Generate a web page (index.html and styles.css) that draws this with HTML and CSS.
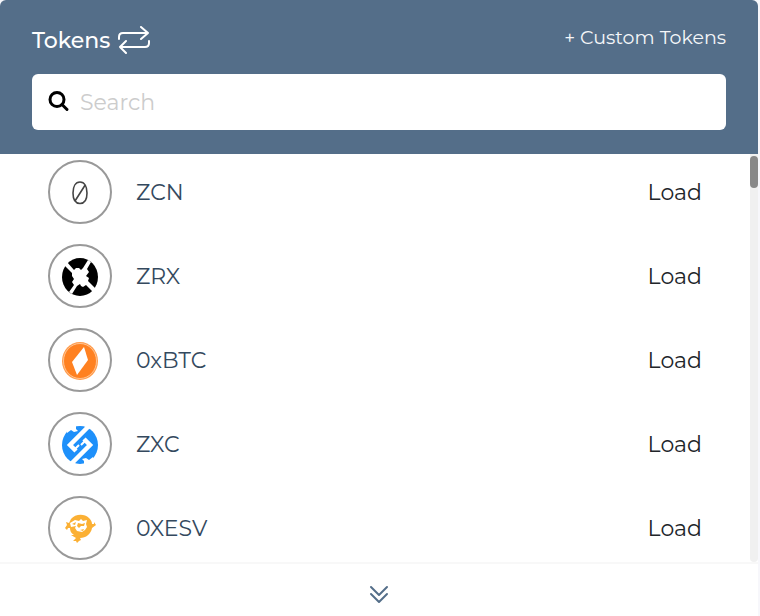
FILE: index.html
```
<!DOCTYPE html>
<html lang="en">
<head>
    <meta charset="UTF-8">
    <title>Tokens</title>
    <link rel="stylesheet" href="styles.css">
</head>
<body>
    <section class="tokens">
        <header class="tokens-header">
            <div class="title-row">
                <h1>Tokens</h1>
                <button class="refresh" type="button" aria-label="Refresh">
                    <svg width="32" height="28" viewBox="0 0 32 28">
                        <path d="M1 13V11Q1 7 5 7H30M23 1L30 7L23 13M31 15V17Q31 21 27 21H2M8 15L2 21L8 27"/>
                    </svg>
                </button>
                <a class="custom" href="#">+ Custom Tokens</a>
            </div>
            <label class="search">
                <svg width="22" height="22" viewBox="0 0 22 22">
                    <circle cx="9" cy="8.500" r="7"/>
                    <path d="M14 13.500L19 18.500"/>
                </svg>
                <input type="text" placeholder="Search" aria-label="Search">
            </label>
        </header>
        <div class="list-wrap">
            <ul class="list">
                <li>
                    <span class="icon">
                        <svg width="36" height="38" viewBox="0 0 36 38">
                            <path fill="none" stroke="#444" stroke-width="1.6" d="M18 8C22.5 8 25 12.500 25 19C25 25.500 22.500 29.500 18 29.500C13.500 29.500 11 25.500 11 19C11 12.500 13.500 8 18 8ZM13 27L23.500 10.500"/>
                        </svg>
                    </span>
                    <span class="name">ZCN</span>
                    <button class="load" type="button">Load</button>
                </li>
                <li>
                    <span class="icon">
                        <svg width="36" height="38" viewBox="0 0 36 38">
                            <ellipse cx="18" cy="19" rx="18" ry="19"/>
                            <path fill="#fff" d="M2 7L5 4L12 12L14 10L17 10L19 12L21 10L26 2L29 4L25 11L27 14L24 18L27 20L26 23L34 31L31 34L24 27L21 29L19 28L18 26L15 28L10 36L7 34L12 27L10 24L12 21L10 18L10 15Z"/>
                        </svg>
                    </span>
                    <span class="name">ZRX</span>
                    <button class="load" type="button">Load</button>
                </li>
                <li>
                    <span class="icon">
                        <svg width="36" height="38" viewBox="0 0 36 38">
                            <ellipse cx="18" cy="19" rx="18" ry="19" fill="#ff9c4d"/>
                            <ellipse cx="18" cy="19" rx="16.500" ry="17.500" fill="#ff8121" stroke="#ffd0a8" stroke-width=".8"/>
                            <path fill="#fff" d="M22 5L26 18L15 33L10 20Z"/>
                        </svg>
                    </span>
                    <span class="name">0xBTC</span>
                    <button class="load" type="button">Load</button>
                </li>
                <li>
                    <span class="icon">
                        <svg width="36" height="38" viewBox="0 0 36 38">
                            <ellipse cx="18" cy="19" rx="18" ry="19" fill="#1e90fa"/>
                            <path fill="none" stroke="#fff" stroke-width="4.500" d="M28 -1L8 19L14 25M8 39L28 19L22 13"/>
                            <path fill="none" stroke="#fff" stroke-width="2" d="M13 23L17 19M23 15L19 19"/>
                            <path fill="#fff" d="M5 0H14V3L16 5L12 6L9 4L5 7ZM31 38H22V35L20 33L24 32L27 34L31 31Z"/>
                        </svg>
                    </span>
                    <span class="name">ZXC</span>
                    <button class="load" type="button">Load</button>
                </li>
                <li>
                    <span class="icon">
                        <svg width="36" height="38" viewBox="0 0 36 38">
                            <path fill="#fbb034" d="M9 9C13 4 22 3 27 8C29 10 30 12 30 14L32 14L32 12L34 15L30 18C29 24 24 28 18 28L19 30L17 31L15 33L14 31L11 31L14 28L9 25L12 25C9 23 8 21 8 18L6 18L5 20L3 18L5 15L4 12L7 13Z"/>
                            <path fill="#fff" d="M8 13L13 10L17 11L19 9L21 11L25 10L24 14L25 17L23 20L20 22L15 21L13 18L14 16L9 17Z"/>
                            <path fill="#fbb034" d="M10 14L14 12L13 15ZM16 13L20 14L23 13L22 16L19 16L17 18L15 16ZM18 20L22 19L21 21Z"/>
                        </svg>
                    </span>
                    <span class="name">0XESV</span>
                    <button class="load" type="button">Load</button>
                </li>
            </ul>
            <div class="track"><div class="thumb"></div></div>
        </div>
        <button class="more" type="button" aria-label="Show more">
            <svg width="20" height="20" viewBox="0 0 20 20">
                <path d="M2 3L10 11L18 3M2 10L10 18L18 10"/>
            </svg>
        </button>
    </section>
</body>
</html>
```
FILE: styles.css
```
*{
    box-sizing: border-box;
}
body{
    margin:0;
    padding-right:2px;
    background: #f7f7fb;
    font-family: Montserrat, Inter, "Open Sans", sans-serif;
    font-size:22px;
    line-height: 32px;
    color: #212529;
}
button,input{
    padding:0;
    border:0;
    background: none;
    font: inherit;
    color: inherit;
}
button{
    cursor: pointer;
}
svg{
    display: block;
}
.tokens{
    display: flex;
    flex-direction: column;
    min-height:100vh;
    background: #fff;
    border-radius:6px 6px 0 0;
}
.tokens-header{
    padding:24px 32px;
    background: #546e89;
    border-radius:6px 6px 0 0;
    color: #fff;
}
.title-row{
    display: flex;
    align-items: flex-start;
    height:50px;
}
h1{
    margin:0;
    font-size:22px;
    font-weight: 500;
    line-height: 34px;
}
.refresh{
    margin:2px 0 0 8px;
}
.refresh svg{
    fill:none;
    stroke:#fff;
    stroke-width:2;
    stroke-linecap: round;
    stroke-linejoin: round;
}
.custom{
    margin-left:auto;
    font-size:19px;
    line-height: 28px;
    color: #f5f7f9;
    text-decoration: none;
}
.search{
    display: flex;
    align-items: center;
    gap:10px;
    height:56px;
    padding:0 16px;
    background: #fff;
    border-radius:6px;
}
.search svg{
    fill:none;
    stroke:#000;
    stroke-width:3;
    stroke-linecap: round;
}
.search input{
    flex:1;
    min-width:0;
    padding-top:2px;
    outline: none;
    color: #212529;
}
.search input::placeholder{
    color: #ccc;
    opacity:1;
}
/* token list */
.list-wrap{
    display: flex;
    border-bottom:2px solid #f8f8f8;
}
.list{
    flex:1;
    display: grid;
    gap:20px;
    margin:0;
    padding:6px 48px 2px 48px;
    list-style: none;
}
.list li{
    display: flex;
    align-items: center;
}
.icon{
    display: flex;
    align-items: center;
    justify-content: center;
    width:64px;
    height:64px;
    margin-right:24px;
    padding-top:2px;
    border:2px solid #999;
    border-radius: 50%;
}
.name,.load{
    padding-top:2px;
}
.name{
    color: #34495e;
}
.load{
    margin-left:auto;
}
.track{
    width:8px;
    padding-top:2px;
    background: #f0f0f0;
    border-radius:0 0 4px 4px;
}
.thumb{
    height:32px;
    background: #888;
    border-radius:4px;
}
.more{
    flex:1;
    display: flex;
    align-items: center;
    justify-content: center;
    padding:20px 0 12px;
}
.more svg{
    fill:none;
    stroke:#546e89;
    stroke-width:2;
    stroke-linecap: round;
    stroke-linejoin: round;
}
```
